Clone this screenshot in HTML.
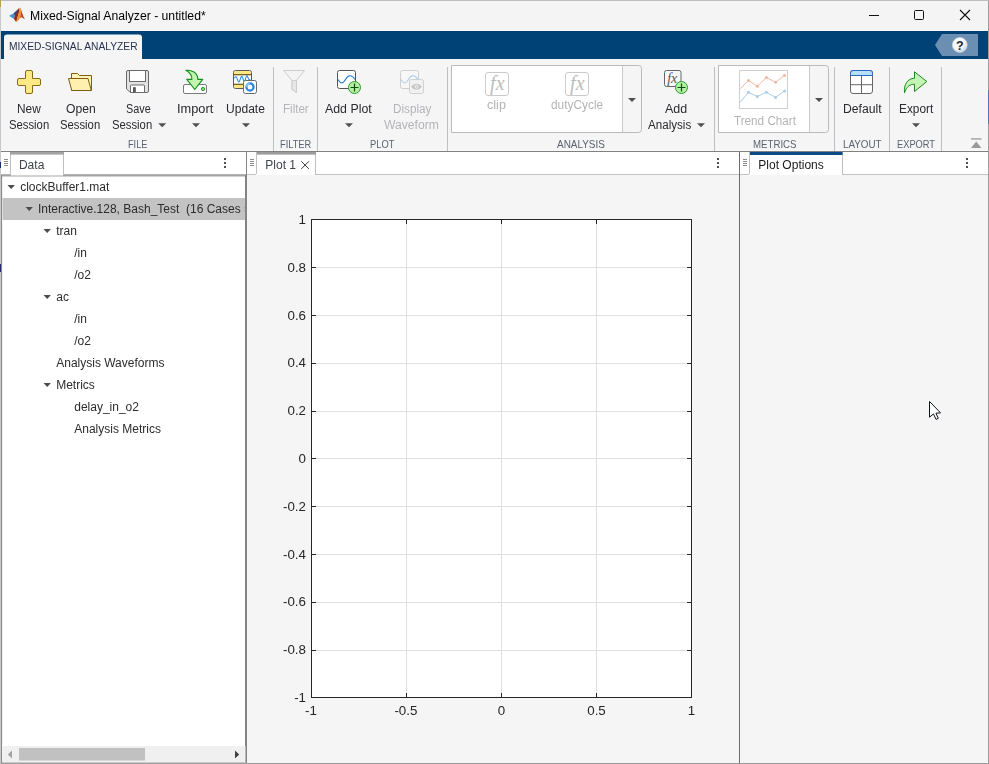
<!DOCTYPE html>
<html lang="en"><head><meta charset="utf-8"><title>Mixed-Signal Analyzer - untitled*</title>
<style>
html,body{margin:0;padding:0;background:#f5f5f5;}
body{width:989px;height:764px;overflow:hidden;}
#root{position:relative;width:989px;height:764px;overflow:hidden;background:#f5f5f5;font-family:"Liberation Sans",sans-serif;}
#g{position:absolute;left:0;top:0;}
.t{position:absolute;white-space:pre;line-height:1;font-family:"Liberation Sans",sans-serif;}
#tx{position:absolute;left:0;top:0;width:989px;height:764px;will-change:transform;}

</style></head><body>
<div id="root">
<svg id="g" width="989" height="764" viewBox="0 0 989 764">
<!-- window frame -->
<rect x="0" y="0" width="989" height="764" fill="#f5f5f5"/>
<rect x="0" y="0" width="989" height="1" fill="#bdbdbd"/>
<rect x="0" y="1" width="1" height="763" fill="#c8c8c8"/><rect x="0" y="0" width="1" height="7" fill="#b8a24a"/><rect x="0" y="264" width="1" height="8" fill="#2a2a6a"/><rect x="0" y="162" width="1" height="6" fill="#1a2a6a"/>
<rect x="1" y="1" width="987" height="30" fill="#f4f4f4"/>
<rect x="988" y="1" width="1" height="763" fill="#9c9c9c"/>
<rect x="1" y="763" width="988" height="1" fill="#9c9c9c"/>
<rect x="988" y="90" width="1" height="34" fill="#4d7ab3"/>
<!-- blue band -->
<rect x="1" y="31" width="987" height="28" fill="#004275"/>
<path d="M4 59V37.5a3 3 0 0 1 3-3H139a3 3 0 0 1 3 3V59Z" fill="#f5f5f5"/>
<!-- help -->
<path d="M935 45L942 34H978V56H942Z" fill="#6b8fb2"/>
<defs>
<radialGradient id="hg" cx="0.4" cy="0.3" r="0.8"><stop offset="0" stop-color="#ffffff"/><stop offset="0.6" stop-color="#f2f4f7"/><stop offset="1" stop-color="#b9c3d0"/></radialGradient>
</defs>
<circle cx="959.8" cy="45" r="7.4" fill="url(#hg)" stroke="#d8dee6" stroke-width="0.6"/>
<text x="959.8" y="49.6" font-family="Liberation Sans, sans-serif" font-weight="bold" font-size="12.5" text-anchor="middle" fill="#20242c">?</text>
<!-- window controls -->
<rect x="869" y="15" width="10" height="1" fill="#111"/>
<rect x="914.5" y="10.5" width="9" height="9" rx="1" fill="none" stroke="#111" stroke-width="1"/>
<path d="M960 10L970 20M970 10L960 20" stroke="#111" stroke-width="1.1" fill="none"/>
<!-- matlab logo -->
<g>
<path d="M9.200 15.700L11.500 14.400L13.800 13.300L14.800 15.200L13.900 18.700L12 17.800L10.500 16.800Z" fill="#3b96da"/>
<path d="M13.800 13.300L16.300 10.900L17.800 9.400L19.300 7.800L19.100 12L17.600 17L16.200 22.100L15 20.500L13.900 18.700L14.800 15.200Z" fill="#8e2b1c"/>
<path d="M13.800 13.300L16.300 10.900L17.800 9.400L17.300 11.800L16 13.600L14.800 15.200Z" fill="#1d4f8f"/>
<path d="M19.300 7.800L20.500 8L20.900 13L20.100 18L18.500 20L17 21.800L16.200 22.100L17.600 17L19.100 12Z" fill="#f0902c"/>
<path d="M20.500 8L21.500 11L22.500 14L23.500 16.500L24.900 19.600L23.500 18.600L21.500 17.200L20.100 18L20.900 13Z" fill="#c4451f"/>
</g>

<!-- ribbon bottom border -->
<rect x="1" y="150" width="987" height="1" fill="#fafafa"/>
<rect x="1" y="151" width="987" height="1" fill="#808080"/>
<!-- ribbon separators -->
<g fill="#bfbfbf">
<rect x="273" y="67" width="1" height="84"/>
<rect x="317" y="67" width="1" height="84"/>
<rect x="447" y="67" width="1" height="84"/>
<rect x="714" y="67" width="1" height="84"/>
<rect x="834" y="67" width="1" height="84"/>
<rect x="889" y="67" width="1" height="84"/>
<rect x="941" y="67" width="1" height="84"/>
</g>

<!-- ICONS -->
<!-- New Session plus -->
<path d="M27 70.500H31a1.500 1.500 0 0 1 1.500 1.500V78.500H39a1.500 1.500 0 0 1 1.500 1.500V84a1.500 1.500 0 0 1 -1.500 1.500H32.500V92a1.500 1.500 0 0 1 -1.500 1.500H27a1.500 1.500 0 0 1 -1.500 -1.500V85.500H19a1.500 1.500 0 0 1 -1.500 -1.500V80a1.500 1.500 0 0 1 1.500 -1.500H25.500V72a1.500 1.500 0 0 1 1.500 -1.500z" fill="#ffe985" stroke="#8a6914" stroke-width="1"/>
<!-- Open folder -->
<path d="M71.500 73.500h6l2 2h12v15h-20z" fill="#fff3b8" stroke="#7d5e12" stroke-width="1" stroke-linejoin="round"/>
<path d="M68.500 78.500h19.500l3.300 12h-19.500z" fill="#fff0b0" stroke="#7d5e12" stroke-width="1" stroke-linejoin="round"/>
<!-- Save floppy -->
<path d="M128 70.500h19a1.500 1.500 0 0 1 1.500 1.500v19a1.500 1.500 0 0 1 -1.500 1.500h-16.500l-4-3.500v-17a1.500 1.500 0 0 1 1.500 -1.500z" fill="#e2e2e2" stroke="#6a6a6a" stroke-width="1"/>
<rect x="129.500" y="70.500" width="16" height="11" fill="#ffffff" stroke="#6a6a6a" stroke-width="1"/>
<path d="M130.500 92.500v-6.500a1 1 0 0 1 1-1h12a1 1 0 0 1 1 1v6.500z" fill="#ffffff" stroke="#6a6a6a" stroke-width="1"/>
<rect x="133" y="87.200" width="2.800" height="5" fill="#555"/>
<!-- Import -->
<rect x="183.500" y="84.500" width="23" height="9" rx="1.500" fill="#ffffff" stroke="#7a7a7a" stroke-width="1"/>
<circle cx="203" cy="89" r="1.600" fill="#8fe07a" stroke="#1f9a1f" stroke-width="1"/>
<path d="M185.900 70.300C191.500 69.800 197.800 72.500 197.800 79.300H202.700L194.800 89.500L186.800 79.300H191.900C192 75.500 190 72.500 185.900 70.300Z" fill="#c2f4b0" stroke="#14901a" stroke-width="1.150" stroke-linejoin="round"/>
<!-- Update -->
<rect x="233.500" y="70.500" width="18" height="18" rx="2" fill="#ffffff" stroke="#5a5a5a" stroke-width="1"/>
<path d="M234 72.500a2 2 0 0 1 2-1.500h13a2 2 0 0 1 2 1.500v2h-17z" fill="#ffe680"/>
<path d="M234 84.500h17v2a2 2 0 0 1 -2 1.500h-13a2 2 0 0 1 -2 -1.500z" fill="#ffe680"/>
<rect x="234" y="74.100" width="17" height="1.200" fill="#6f5510"/>
<rect x="234" y="83.700" width="17" height="1.200" fill="#6f5510"/>
<path d="M234.300 78.200c1-2 2.200-2 3 1s1.800 4 2.800 0.500s1.700-5 2.700-1.500s1.800 4.800 2.800 0.500s1.600-3.500 2.400-1s1.500 2.500 2.200 1.500" fill="none" stroke="#2a8ae0" stroke-width="1.100"/>
<rect x="243.500" y="80.500" width="13" height="13" rx="2" fill="#ffffff" stroke="#6a6a6a" stroke-width="1"/>
<circle cx="250" cy="87" r="3.600" fill="none" stroke="#2a86e2" stroke-width="2.200"/><path d="M246.400 87a3.600 3.600 0 0 1 3.600 -3.600" fill="none" stroke="#7fc0f5" stroke-width="2.200"/>
<!-- Filter (disabled) -->
<path d="M283.500 70.500h21l-8 10v12l-4.500-3v-9z" fill="#f3f3f3" stroke="#cdcdcd" stroke-width="1" stroke-linejoin="round"/>
<path d="M292 80.500h4.500v12l-4.500-3z" fill="#e6e6e6" stroke="#cdcdcd" stroke-width="1" stroke-linejoin="round"/>
<!-- Add Plot -->
<rect x="337.500" y="70.500" width="18" height="18" rx="2" fill="#ffffff" stroke="#555" stroke-width="1"/>
<path d="M338 79.500c2.500 4.500 5 4.500 7.500 0s6-5.500 9.500 0" fill="none" stroke="#2a7fd0" stroke-width="1.200"/>
<circle cx="354.500" cy="87.500" r="6" fill="#b5f0a2" stroke="#2a9a2a" stroke-width="1"/>
<path d="M354.500 83.500v8M350.500 87.500h8" stroke="#0a4f0a" stroke-width="1.200" fill="none"/>
<!-- Display Waveform (disabled) -->
<rect x="400.500" y="70.500" width="18" height="18" rx="2" fill="#f7f7f7" stroke="#cfcfcf" stroke-width="1"/>
<path d="M401 79.500c2.500 4.500 5 4.500 7.500 0s6-5.500 9.500 0" fill="none" stroke="#a9cdea" stroke-width="1.100"/>
<rect x="409.500" y="79.500" width="14" height="14" rx="2" fill="#f1f1f1" stroke="#cfcfcf" stroke-width="1"/>
<path d="M411.200 86.700c3-4 7.600-4 10.600 0c-3 4-7.600 4-10.600 0z" fill="#c4c4c4"/>
<circle cx="416.500" cy="86.700" r="2" fill="#f1f1f1"/>
<circle cx="416.500" cy="86.700" r="1" fill="#c4c4c4"/>
<!-- Analysis gallery -->
<path d="M451.500 65.500h187a3 3 0 0 1 3 3v61a3 3 0 0 1 -3 3h-187z" fill="#f5f5f5" stroke="#bababa" stroke-width="1"/>
<rect x="452" y="66" width="170" height="66" fill="#ffffff"/>
<rect x="622" y="66" width="1" height="66" fill="#c9c9c9"/>
<path d="M628 98h8l-4 4z" fill="#505050"/>
<rect x="485.500" y="72.500" width="23" height="23" rx="2.500" fill="#ffffff" stroke="#cbcbcb" stroke-width="1"/>
<text x="497.300" y="90" font-family="Liberation Serif, serif" font-style="italic" font-size="20" text-anchor="middle" fill="#bdbdbd">fx</text>
<rect x="565.500" y="72.500" width="23" height="23" rx="2.500" fill="#ffffff" stroke="#cbcbcb" stroke-width="1"/>
<text x="577.300" y="90" font-family="Liberation Serif, serif" font-style="italic" font-size="20" text-anchor="middle" fill="#bdbdbd">fx</text>
<!-- Add Analysis -->
<rect x="664.500" y="70.500" width="16.500" height="16" rx="2" fill="#f8f8f8" stroke="#666" stroke-width="1"/>
<text x="672.300" y="82.600" font-family="Liberation Serif, serif" font-style="italic" font-size="14" text-anchor="middle" fill="#555">fx</text>
<circle cx="681.500" cy="87.500" r="6" fill="#b5f0a2" stroke="#2a9a2a" stroke-width="1"/>
<path d="M681.500 83.500v8M677.500 87.500h8" stroke="#0a4f0a" stroke-width="1.200" fill="none"/>
<path d="M697 123.300h8l-4 4z" fill="#505050"/>
<!-- Metrics gallery -->
<path d="M718.500 65.500h107a3 3 0 0 1 3 3v61a3 3 0 0 1 -3 3h-107z" fill="#f5f5f5" stroke="#bababa" stroke-width="1"/>
<rect x="719" y="66" width="90" height="66" fill="#ffffff"/>
<rect x="809" y="66" width="1" height="66" fill="#c9c9c9"/>
<path d="M815 98h8l-4 4z" fill="#505050"/>
<rect x="739.500" y="70.500" width="48" height="38" fill="#ffffff" stroke="#cfcfcf" stroke-width="1"/>
<polyline points="740,88.900 748.500,80.400 757.300,86.300 766.400,77.500 775.500,82.300 784.500,75.400" fill="none" stroke="#f2b9a2" stroke-width="1"/>
<g fill="#f2b9a2"><circle cx="748.500" cy="80.400" r="1.500"/><circle cx="757.300" cy="86.300" r="1.500"/><circle cx="766.400" cy="77.500" r="1.500"/><circle cx="775.500" cy="82.300" r="1.500"/><circle cx="784.500" cy="75.400" r="1.500"/></g>
<polyline points="740,102.400 748.500,92.200 757.300,96.600 766.400,92.200 775.500,97.400 784.500,91.100" fill="none" stroke="#a9cde9" stroke-width="1"/>
<g fill="#a9cde9"><circle cx="748.500" cy="92.200" r="1.500"/><circle cx="757.300" cy="96.600" r="1.500"/><circle cx="766.400" cy="92.200" r="1.500"/><circle cx="775.500" cy="97.400" r="1.500"/><circle cx="784.500" cy="91.100" r="1.500"/></g>
<!-- Default layout icon -->
<rect x="850.500" y="70.500" width="22" height="23" rx="2.500" fill="#ffffff" stroke="#666" stroke-width="1"/>
<path d="M850.500 75.500v-2.500a2.500 2.500 0 0 1 2.500 -2.500h17a2.500 2.500 0 0 1 2.500 2.500v2.500z" fill="#b7defd" stroke="#2b68c0" stroke-width="1"/>
<rect x="861" y="76" width="1" height="17" fill="#666"/>
<rect x="851" y="84.200" width="21" height="1" fill="#666"/>
<!-- Export -->
<path d="M914.500 71.800l12.300 9.700l-12.300 10v-7.200c-4.500-0.300-8 2.500-10 8.500c-0.800-8.500 3-14.200 10-14.600z" fill="#c4f5b4" stroke="#1b8a1b" stroke-width="1" stroke-linejoin="round"/>
<!-- dropdown arrows -->
<g fill="#505050">
<path d="M158.200 123.300h8l-4 4z"/>
<path d="M192 123.300h8l-4 4z"/>
<path d="M242 123.300h8l-4 4z"/>
<path d="M345 123.300h8l-4 4z"/>
<path d="M912 123.300h8l-4 4z"/>
</g>
<!-- collapse icon -->
<rect x="971" y="138.300" width="10.500" height="1.300" fill="#9a9a9a"/>
<path d="M971 148l5.200-6.500l5.200 6.500z" fill="#9a9a9a"/>

<!-- DOC AREA -->
<rect x="1" y="152" width="987" height="23" fill="#ffffff"/>
<!-- tab bar bottom lines -->
<rect x="1" y="174" width="987" height="1" fill="#c2c2c2"/>
<!-- data panel -->
<rect x="1" y="175" width="246" height="588" fill="#ffffff"/>
<rect x="1" y="174.500" width="246" height="2" fill="#a4a4a4"/>
<rect x="1" y="175" width="1.100" height="588" fill="#8a8a8a"/>
<rect x="245" y="175" width="2" height="588" fill="#838383"/>
<rect x="246" y="152" width="1" height="23" fill="#858585"/>
<rect x="2" y="762" width="244" height="1" fill="#a4a4a4"/>
<!-- Data tab -->
<rect x="10" y="152" width="54" height="23" fill="#ffffff"/><rect x="10" y="152" width="1" height="23" fill="#c0c0c0"/><rect x="63" y="152" width="1" height="23" fill="#c0c0c0"/>
<rect x="10" y="152" width="54" height="2.600" fill="#a3a3a3"/>
<rect x="11" y="174" width="52" height="1.500" fill="#ffffff"/>
<g fill="#8c8c8c"><rect x="4" y="159" width="4" height="1"/><rect x="4" y="161" width="4" height="1"/><rect x="4" y="163" width="4" height="1"/><rect x="4" y="165" width="4" height="1"/></g>
<g fill="#505050"><rect x="224" y="158" width="2" height="2"/><rect x="224" y="162" width="2" height="2"/><rect x="224" y="166" width="2" height="2"/></g>
<!-- tree selection -->
<rect x="2.500" y="198" width="242.500" height="22" fill="#c3c3c3"/>
<rect x="244" y="207" width="1" height="1.200" fill="#a9a9a9"/><rect x="244" y="210" width="1" height="1.200" fill="#a9a9a9"/>
<!-- tree arrows -->
<g fill="#4c4c4c">
<path d="M7.500 185h7.400l-3.700 4z"/>
<path d="M25.500 207h7.400l-3.700 4z"/>
<path d="M43.500 229h7.400l-3.700 4z"/>
<path d="M43.500 295h7.400l-3.700 4z"/>
<path d="M43.500 383h7.400l-3.700 4z"/>
</g>
<!-- scrollbar -->
<rect x="2.500" y="746" width="243" height="16.500" fill="#f0f0f0"/>
<rect x="19" y="748" width="126" height="12.500" fill="#c1c1c1"/>
<path d="M12 750.500v8l-4.200-4z" fill="#a3a3a3"/>
<path d="M235 750.500v8l4.200-4z" fill="#404040"/>

<!-- plot panel -->
<rect x="247" y="175" width="492" height="588" fill="#f5f5f5"/>
<rect x="256" y="152" width="60" height="23" fill="#ffffff"/><rect x="256" y="152" width="1" height="22" fill="#c0c0c0"/><rect x="315" y="152" width="1" height="23" fill="#c0c0c0"/>
<rect x="257" y="152" width="59" height="2.600" fill="#9c9c9c"/>
<rect x="257" y="174" width="58" height="1" fill="#ffffff"/>
<g fill="#8c8c8c"><rect x="250" y="159" width="4" height="1"/><rect x="250" y="161" width="4" height="1"/><rect x="250" y="163" width="4" height="1"/><rect x="250" y="165" width="4" height="1"/></g>
<path d="M301.300 161.300l7.600 7.600M308.900 161.300l-7.600 7.600" stroke="#3a3a3a" stroke-width="1" fill="none"/>
<g fill="#505050"><rect x="717" y="158" width="2" height="2"/><rect x="717" y="162" width="2" height="2"/><rect x="717" y="166" width="2" height="2"/></g>
<!-- axes -->
<rect x="311" y="219" width="381" height="479" fill="#ffffff"/>
<g fill="#dfdfdf">
<rect x="406" y="219" width="1" height="479"/><rect x="501" y="219" width="1" height="479"/><rect x="596" y="219" width="1" height="479"/>
<rect x="311" y="267" width="381" height="1"/><rect x="311" y="315" width="381" height="1"/><rect x="311" y="363" width="381" height="1"/><rect x="311" y="411" width="381" height="1"/><rect x="311" y="458" width="381" height="1"/><rect x="311" y="506" width="381" height="1"/><rect x="311" y="554" width="381" height="1"/><rect x="311" y="602" width="381" height="1"/><rect x="311" y="650" width="381" height="1"/>
</g>
<g fill="#262626">
<rect x="311" y="219" width="381" height="1"/><rect x="311" y="697" width="381" height="1"/><rect x="311" y="219" width="1" height="479"/><rect x="691" y="219" width="1" height="479"/>
<!-- ticks x -->
<rect x="406" y="693" width="1" height="4"/><rect x="501" y="693" width="1" height="4"/><rect x="596" y="693" width="1" height="4"/>
<rect x="406" y="220" width="1" height="4"/><rect x="501" y="220" width="1" height="4"/><rect x="596" y="220" width="1" height="4"/>
<!-- ticks y -->
<rect x="312" y="267" width="4" height="1"/><rect x="312" y="315" width="4" height="1"/><rect x="312" y="363" width="4" height="1"/><rect x="312" y="411" width="4" height="1"/><rect x="312" y="458" width="4" height="1"/><rect x="312" y="506" width="4" height="1"/><rect x="312" y="554" width="4" height="1"/><rect x="312" y="602" width="4" height="1"/><rect x="312" y="650" width="4" height="1"/>
<rect x="687" y="267" width="4" height="1"/><rect x="687" y="315" width="4" height="1"/><rect x="687" y="363" width="4" height="1"/><rect x="687" y="411" width="4" height="1"/><rect x="687" y="458" width="4" height="1"/><rect x="687" y="506" width="4" height="1"/><rect x="687" y="554" width="4" height="1"/><rect x="687" y="602" width="4" height="1"/><rect x="687" y="650" width="4" height="1"/>
</g>

<!-- plot options panel -->
<rect x="739" y="152" width="1" height="611" fill="#6e6e6e"/>
<rect x="740" y="175" width="248" height="588" fill="#f5f5f5"/>
<rect x="749" y="152" width="94" height="23" fill="#ffffff"/><rect x="749" y="152" width="1" height="22" fill="#c0c0c0"/><rect x="842" y="152" width="1" height="23" fill="#c0c0c0"/>
<rect x="750" y="152" width="92.500" height="3" fill="#0b4a86"/>
<rect x="750" y="174" width="92" height="1" fill="#ffffff"/>
<g fill="#8c8c8c"><rect x="743" y="159" width="4" height="1"/><rect x="743" y="161" width="4" height="1"/><rect x="743" y="163" width="4" height="1"/><rect x="743" y="165" width="4" height="1"/></g>
<g fill="#505050"><rect x="966" y="158" width="2" height="2"/><rect x="966" y="162" width="2" height="2"/><rect x="966" y="166" width="2" height="2"/></g>
<!-- cursor -->
<path d="M929.500 401.500V417.200L933.500 413.900L936 419.400L938.300 418.300L935.900 413.200L940.600 412.900Z" fill="#ffffff" stroke="#10131c" stroke-width="1" stroke-linejoin="miter"/>
</svg>

<div id="tx">
<span class="t" style="left:29.70px;top:9.54px;font-size:12px;color:#000000;transform:scaleX(1.0170);transform-origin:0 0;">Mixed-Signal Analyzer - untitled*</span>
<span class="t" style="left:9.15px;top:41.09px;font-size:11px;color:#27324e;transform:scaleX(0.9308);transform-origin:0 0;">MIXED-SIGNAL ANALYZER</span>
<span class="t" style="left:16.90px;top:103.04px;font-size:12px;color:#2a2a30;transform:scaleX(0.9869);transform-origin:0 0;">New</span>
<span class="t" style="left:8.90px;top:119.24px;font-size:12px;color:#2a2a30;transform:scaleX(0.9414);transform-origin:0 0;">Session</span>
<span class="t" style="left:65.90px;top:103.04px;font-size:12px;color:#2a2a30;transform:scaleX(1.0116);transform-origin:0 0;">Open</span>
<span class="t" style="left:60.40px;top:119.24px;font-size:12px;color:#2a2a30;transform:scaleX(0.9414);transform-origin:0 0;">Session</span>
<span class="t" style="left:125.90px;top:103.04px;font-size:12px;color:#2a2a30;transform:scaleX(0.9028);transform-origin:0 0;">Save</span>
<span class="t" style="left:111.90px;top:119.24px;font-size:12px;color:#2a2a30;transform:scaleX(0.9414);transform-origin:0 0;">Session</span>
<span class="t" style="left:176.70px;top:103.04px;font-size:12px;color:#2a2a30;transform:scaleX(1.0642);transform-origin:0 0;">Import</span>
<span class="t" style="left:225.70px;top:103.04px;font-size:12px;color:#2a2a30;transform:scaleX(1.0051);transform-origin:0 0;">Update</span>
<span class="t" style="left:282.60px;top:103.04px;font-size:12px;color:#b4b4b8;transform:scaleX(0.9636);transform-origin:0 0;">Filter</span>
<span class="t" style="left:325.20px;top:103.04px;font-size:12px;color:#2a2a30;transform:scaleX(1.0292);transform-origin:0 0;">Add Plot</span>
<span class="t" style="left:392.70px;top:103.04px;font-size:12px;color:#b4b4b8;transform:scaleX(0.9756);transform-origin:0 0;">Display</span>
<span class="t" style="left:384.20px;top:119.24px;font-size:12px;color:#b4b4b8;transform:scaleX(1.0104);transform-origin:0 0;">Waveform</span>
<span class="t" style="left:487.20px;top:99.04px;font-size:12px;color:#b4b4b8;transform:scaleX(1.0491);transform-origin:0 0;">clip</span>
<span class="t" style="left:550.70px;top:99.04px;font-size:12px;color:#b4b4b8;transform:scaleX(0.9907);transform-origin:0 0;">dutyCycle</span>
<span class="t" style="left:664.80px;top:103.04px;font-size:12px;color:#2a2a30;transform:scaleX(1.0394);transform-origin:0 0;">Add</span>
<span class="t" style="left:648.10px;top:119.24px;font-size:12px;color:#2a2a30;transform:scaleX(0.9667);transform-origin:0 0;">Analysis</span>
<span class="t" style="left:733.60px;top:115.04px;font-size:12px;color:#b4b4b8;transform:scaleX(0.9749);transform-origin:0 0;">Trend Chart</span>
<span class="t" style="left:843.10px;top:103.04px;font-size:12px;color:#2a2a30;transform:scaleX(1.0176);transform-origin:0 0;">Default</span>
<span class="t" style="left:898.80px;top:103.04px;font-size:12px;color:#2a2a30;transform:scaleX(0.9859);transform-origin:0 0;">Export</span>
<span class="t" style="left:128.15px;top:139.09px;font-size:11px;color:#5b6170;transform:scaleX(0.8350);transform-origin:0 0;">FILE</span>
<span class="t" style="left:280.35px;top:139.09px;font-size:11px;color:#5b6170;transform:scaleX(0.8415);transform-origin:0 0;">FILTER</span>
<span class="t" style="left:369.85px;top:139.09px;font-size:11px;color:#5b6170;transform:scaleX(0.8492);transform-origin:0 0;">PLOT</span>
<span class="t" style="left:557.15px;top:139.09px;font-size:11px;color:#5b6170;transform:scaleX(0.9038);transform-origin:0 0;">ANALYSIS</span>
<span class="t" style="left:753.05px;top:139.09px;font-size:11px;color:#5b6170;transform:scaleX(0.8788);transform-origin:0 0;">METRICS</span>
<span class="t" style="left:843.15px;top:139.09px;font-size:11px;color:#5b6170;transform:scaleX(0.8935);transform-origin:0 0;">LAYOUT</span>
<span class="t" style="left:897.05px;top:139.09px;font-size:11px;color:#5b6170;transform:scaleX(0.8439);transform-origin:0 0;">EXPORT</span>
<span class="t" style="left:18.96px;top:158.54px;font-size:12px;color:#40424e;">Data</span>
<span class="t" style="left:265.36px;top:158.54px;font-size:12px;color:#40424e;">Plot 1</span>
<span class="t" style="left:758.36px;top:158.54px;font-size:12px;color:#1a1a1e;">Plot Options</span>
<span class="t" style="left:20.21px;top:181.24px;font-size:12px;color:#2c2c2c;">clockBuffer1.mat</span>
<span class="t" style="left:37.91px;top:203.24px;font-size:12px;color:#2c2c2c;">Interactive.128, Bash_Test  (16 Cases</span>
<span class="t" style="left:56.21px;top:225.24px;font-size:12px;color:#2c2c2c;">tran</span>
<span class="t" style="left:74.21px;top:247.24px;font-size:12px;color:#2c2c2c;">/in</span>
<span class="t" style="left:74.21px;top:269.24px;font-size:12px;color:#2c2c2c;">/o2</span>
<span class="t" style="left:56.21px;top:291.24px;font-size:12px;color:#2c2c2c;">ac</span>
<span class="t" style="left:74.21px;top:313.24px;font-size:12px;color:#2c2c2c;">/in</span>
<span class="t" style="left:74.21px;top:335.24px;font-size:12px;color:#2c2c2c;">/o2</span>
<span class="t" style="left:56.21px;top:357.24px;font-size:12px;color:#2c2c2c;">Analysis Waveforms</span>
<span class="t" style="left:56.21px;top:379.24px;font-size:12px;color:#2c2c2c;">Metrics</span>
<span class="t" style="left:74.21px;top:401.24px;font-size:12px;color:#2c2c2c;">delay_in_o2</span>
<span class="t" style="left:74.21px;top:423.24px;font-size:12px;color:#2c2c2c;">Analysis Metrics</span>
<span class="t" style="left:298.58px;top:212.92px;font-size:13.33px;color:#262626;">1</span>
<span class="t" style="left:287.47px;top:260.72px;font-size:13.33px;color:#262626;">0.8</span>
<span class="t" style="left:287.47px;top:308.52px;font-size:13.33px;color:#262626;">0.6</span>
<span class="t" style="left:287.47px;top:356.32px;font-size:13.33px;color:#262626;">0.4</span>
<span class="t" style="left:287.47px;top:404.12px;font-size:13.33px;color:#262626;">0.2</span>
<span class="t" style="left:298.58px;top:451.92px;font-size:13.33px;color:#262626;">0</span>
<span class="t" style="left:283.03px;top:499.72px;font-size:13.33px;color:#262626;">-0.2</span>
<span class="t" style="left:283.03px;top:547.52px;font-size:13.33px;color:#262626;">-0.4</span>
<span class="t" style="left:283.03px;top:595.32px;font-size:13.33px;color:#262626;">-0.6</span>
<span class="t" style="left:283.03px;top:643.12px;font-size:13.33px;color:#262626;">-0.8</span>
<span class="t" style="left:294.14px;top:690.92px;font-size:13.33px;color:#262626;">-1</span>
<span class="t" style="left:304.97px;top:704.02px;font-size:13.33px;color:#262626;">-1</span>
<span class="t" style="left:394.42px;top:704.02px;font-size:13.33px;color:#262626;">-0.5</span>
<span class="t" style="left:497.79px;top:704.02px;font-size:13.33px;color:#262626;">0</span>
<span class="t" style="left:587.23px;top:704.02px;font-size:13.33px;color:#262626;">0.5</span>
<span class="t" style="left:687.79px;top:704.02px;font-size:13.33px;color:#262626;">1</span>
</div>
</div>
</body></html>
